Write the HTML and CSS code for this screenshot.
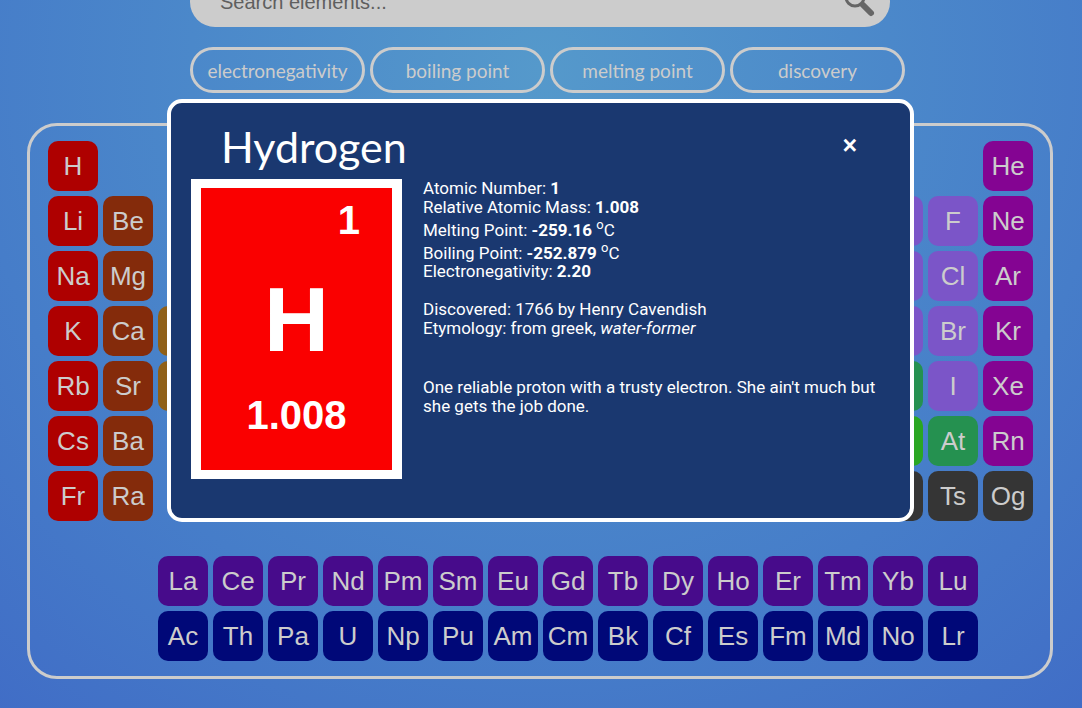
FILE: index.html
```html
<!DOCTYPE html>
<html lang="en">
<head>
<meta charset="utf-8">
<meta name="viewport" content="width=device-width, initial-scale=1">
<title>Periodic Table</title>
<link rel="stylesheet" href="styles.css">
</head>
<body>
<main class="page">
  <header class="controls">
    <form class="search">
      <input class="search-input" type="text" placeholder="Search elements..." aria-label="Search elements">
      <button class="search-button" type="button" aria-label="Search">
        <svg width="32" height="32" viewBox="0 0 32 32" aria-hidden="true">
          <circle cx="11" cy="11" r="9" fill="none" stroke="#666" stroke-width="3"/>
          <path d="M19 19L27 27" stroke="#666" stroke-width="6" stroke-linecap="round"/>
        </svg>
      </button>
    </form>
    <nav class="filters">
      <button class="filter" type="button">electronegativity</button>
      <button class="filter" type="button">boiling point</button>
      <button class="filter" type="button">melting point</button>
      <button class="filter" type="button">discovery</button>
    </nav>
  </header>

  <section class="table">
    <div class="main-block">
      <div class="side">
        <div class="group">
          <button class="cell alkali">H</button>
          <button class="cell alkali">Li</button>
          <button class="cell alkali">Na</button>
          <button class="cell alkali">K</button>
          <button class="cell alkali">Rb</button>
          <button class="cell alkali">Cs</button>
          <button class="cell alkali">Fr</button>
        </div>
        <div class="group">
          <button class="cell alkaline">Be</button>
          <button class="cell alkaline">Mg</button>
          <button class="cell alkaline">Ca</button>
          <button class="cell alkaline">Sr</button>
          <button class="cell alkaline">Ba</button>
          <button class="cell alkaline">Ra</button>
        </div>
        <div class="group group-three">
          <button class="cell transition">Sc</button>
          <button class="cell transition">Y</button>
        </div>
      </div>
      <div class="side">
        <div class="group">
          <button class="cell nonmetal">O</button>
          <button class="cell nonmetal">S</button>
          <button class="cell nonmetal">Se</button>
          <button class="cell metalloid">Te</button>
          <button class="cell post">Po</button>
          <button class="cell unknown">Lv</button>
        </div>
        <div class="group">
          <button class="cell nonmetal">F</button>
          <button class="cell nonmetal">Cl</button>
          <button class="cell nonmetal">Br</button>
          <button class="cell nonmetal">I</button>
          <button class="cell metalloid">At</button>
          <button class="cell unknown">Ts</button>
        </div>
        <div class="group">
          <button class="cell noble">He</button>
          <button class="cell noble">Ne</button>
          <button class="cell noble">Ar</button>
          <button class="cell noble">Kr</button>
          <button class="cell noble">Xe</button>
          <button class="cell noble">Rn</button>
          <button class="cell unknown">Og</button>
        </div>
      </div>
    </div>
    <div class="f-block">
      <button class="cell lanthanide">La</button>
      <button class="cell lanthanide">Ce</button>
      <button class="cell lanthanide">Pr</button>
      <button class="cell lanthanide">Nd</button>
      <button class="cell lanthanide">Pm</button>
      <button class="cell lanthanide">Sm</button>
      <button class="cell lanthanide">Eu</button>
      <button class="cell lanthanide">Gd</button>
      <button class="cell lanthanide">Tb</button>
      <button class="cell lanthanide">Dy</button>
      <button class="cell lanthanide">Ho</button>
      <button class="cell lanthanide">Er</button>
      <button class="cell lanthanide">Tm</button>
      <button class="cell lanthanide">Yb</button>
      <button class="cell lanthanide">Lu</button>
      <button class="cell actinide">Ac</button>
      <button class="cell actinide">Th</button>
      <button class="cell actinide">Pa</button>
      <button class="cell actinide">U</button>
      <button class="cell actinide">Np</button>
      <button class="cell actinide">Pu</button>
      <button class="cell actinide">Am</button>
      <button class="cell actinide">Cm</button>
      <button class="cell actinide">Bk</button>
      <button class="cell actinide">Cf</button>
      <button class="cell actinide">Es</button>
      <button class="cell actinide">Fm</button>
      <button class="cell actinide">Md</button>
      <button class="cell actinide">No</button>
      <button class="cell actinide">Lr</button>
    </div>
  </section>
</main>

<div class="overlay">
  <section class="modal" role="dialog" aria-labelledby="modal-title">
    <header class="modal-header">
      <h1 class="modal-title" id="modal-title">Hydrogen</h1>
      <button class="close" type="button" aria-label="Close">×</button>
    </header>
    <div class="modal-body">
      <div class="card">
        <div class="card-number">1</div>
        <div class="card-symbol">H</div>
        <div class="card-mass">1.008</div>
      </div>
      <div class="info">
        <div>Atomic Number: <b>1</b></div>
        <div>Relative Atomic Mass: <b>1.008</b></div>
        <div>Melting Point: <b>-259.16</b> <sup>o</sup>C</div>
        <div>Boiling Point: <b>-252.879</b> <sup>o</sup>C</div>
        <div>Electronegativity: <b>2.20</b></div>
        <p class="history">Discovered: 1766 by Henry Cavendish<br>Etymology: from greek, <i>water-former</i></p>
        <p class="blurb">One reliable proton with a trusty electron. She ain't much but she gets the job done.</p>
      </div>
    </div>
  </section>
</div>
</body>
</html>
```

FILE: styles.css
```css
* {
  box-sizing: border-box;
}

body {
  margin: 0;
  min-height: 100vh;
  overflow: hidden;
  font-family: "Liberation Sans", Arial, sans-serif;
  color: #ccc;
  background: radial-gradient(circle at 50% 70px, #5599cb 0, #4b88ca 350px, #467dc9 570px, #406cc6 860px);
}

button {
  font: inherit;
  color: inherit;
  border: 0;
  padding: 0;
  background: none;
  cursor: pointer;
}

.page {
  display: flex;
  flex-direction: column;
  align-items: center;
  gap: 30px;
  padding-right: 2px;
}

/* Search and filters */

.controls {
  display: flex;
  flex-direction: column;
  gap: 20px;
  width: 700px;
  margin-top: -23px;
}

.search {
  display: flex;
  align-items: center;
  height: 50px;
  padding: 0 14px 0 30px;
  border-radius: 25px;
  background: #ccc;
}

.search-input {
  flex: 1;
  min-width: 0;
  padding: 0;
  border: 0;
  background: none;
  font: 20px "Liberation Sans", Arial, sans-serif;
  color: #555;
}

.search-input::placeholder {
  color: #5f5f5f;
}

.search-button {
  display: flex;
}

.filters {
  display: flex;
  gap: 5px;
}

.filter {
  flex: 0 0 175px;
  height: 46px;
  border: 3px solid #ccc;
  border-radius: 23px;
  font-family: Lato, sans-serif;
  font-size: 19px;
}

/* Periodic table */

.table {
  display: flex;
  flex-direction: column;
  gap: 35px;
  width: 95%;
  padding: 15px 17px 15px 18px;
  border: 3px solid #ccc;
  border-radius: 30px;
}

.main-block {
  display: flex;
  justify-content: space-between;
}

.side {
  display: flex;
  gap: 5px;
}

.group {
  display: flex;
  flex-direction: column;
  justify-content: flex-end;
  gap: 5px;
}

.group-three {
  padding-bottom: 110px;
}

.f-block {
  display: grid;
  grid-template-columns: repeat(15, 50px);
  gap: 5px;
  padding-left: 110px;
}

.cell {
  width: 50px;
  height: 50px;
  border-radius: 10px;
  font-size: 26px;
}

.alkali { background: #ae0000; }
.alkaline { background: #842b0b; }
.transition { background: #906018; }
.nonmetal { background: #7b55c8; }
.metalloid { background: #259150; }
.post { background: #2aa722; }
.noble { background: #840492; }
.unknown { background: #353535; }
.lanthanide { background: #470b8b; }
.actinide { background: #000878; }

/* Element details */

.overlay {
  position: fixed;
  inset: 0;
  display: flex;
  align-items: flex-start;
  padding: 99px 168px 0 167px;
}

.modal {
  flex: 1;
  padding: 0 20px 39px;
  border: 4px solid #fff;
  border-radius: 15px;
  background: #1a3870;
  color: #fff;
}

.modal-header {
  display: flex;
  align-items: flex-start;
  justify-content: space-between;
  height: 76px;
  padding: 20px 33px 0 30px;
}

.modal-title {
  margin: 0;
  font: 400 43px/48px Lato, sans-serif;
}

.close {
  margin-top: 12px;
  font: 700 25px/20px "Liberation Sans", Arial, sans-serif;
}

.modal-body {
  display: flex;
  align-items: flex-start;
  gap: 21px;
}

.card {
  flex: 0 0 211px;
  display: flex;
  flex-direction: column;
  height: 300px;
  padding: 9px 30px 0;
  border: 9px solid #fff;
  border-width: 9px 10px;
  background: #fa0000;
  font-weight: 700;
  font-size: 40px;
  line-height: 46px;
  text-align: center;
}

.card-number {
  padding-right: 2px;
  text-align: right;
}

.card-symbol {
  padding: 25px 0 20px;
  font-size: 90px;
  line-height: 104px;
}

.info {
  flex: 1;
  font: 17px/19px Roboto, sans-serif;
}

.info sup {
  font-size: 13px;
  line-height: 15px;
}

.history {
  margin: 19px 0 0;
}

.blurb {
  margin: 40px 0 0;
}
```
